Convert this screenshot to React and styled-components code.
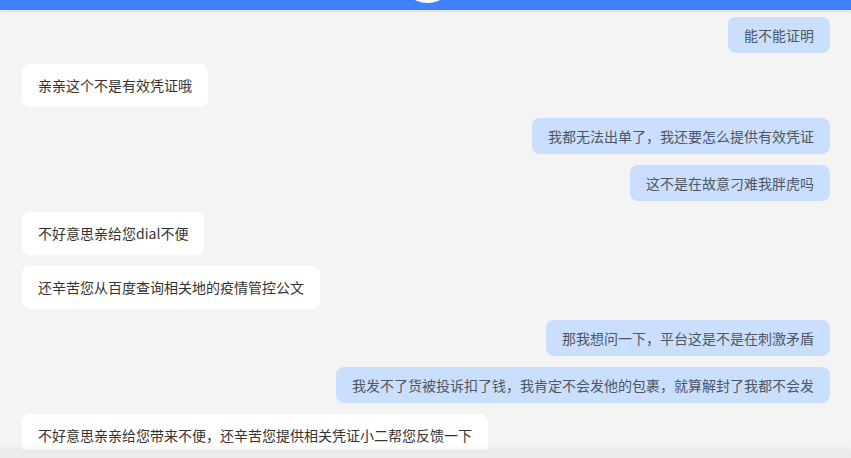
import React from "react";
import styled, { createGlobalStyle } from "styled-components";

const Global = createGlobalStyle`
  html, body { margin: 0; padding: 0; background: #f4f4f4; }
  body { font-family: "Noto Sans CJK SC", "Noto Sans", sans-serif; }
  #root { height: 458px; }
`;

const Page = styled.div`
  height: 458px;
  display: flex;
  flex-direction: column;
  overflow: hidden;
  background: #f4f4f4;
`;

const Header = styled.div`
  position: relative;
  flex: 0 0 10px;
  background: #4080fc;
  box-shadow: 0 1px 4px rgba(0, 0, 0, 0.12);
  z-index: 2;
  overflow: hidden;
`;

const Knob = styled.div`
  position: absolute;
  left: 400px;
  top: -52px;
  width: 55px;
  height: 55px;
  border-radius: 50%;
  background: #ffffff;
`;

const List = styled.div`
  flex: 1;
  overflow: hidden;
  display: flex;
  flex-direction: column;
  gap: 11px;
  padding: 7px 21px 0 22px;
`;

const Row = styled.div`
  display: flex;
  justify-content: ${(p) => (p.$mine ? "flex-end" : "flex-start")};
`;

const Bubble = styled.div`
  box-sizing: border-box;
  font-size: 14px;
  line-height: 20px;
  white-space: nowrap;
  border-radius: 8px;
  padding: ${(p) => (p.$mine ? "8px 16px" : "11px 16px 12px")};
  background: ${(p) => (p.$mine ? "#cadffd" : "#ffffff")};
  color: ${(p) => (p.$mine ? "#4d5666" : "#333333")};
`;

const Footer = styled.div`
  flex: 0 0 8px;
  background: #ececec;
  box-shadow: 0 -2px 4px rgba(0, 0, 0, 0.05);
  z-index: 2;
`;

const messages = [
  { mine: true, text: "能不能证明" },
  { mine: false, text: "亲亲这个不是有效凭证哦" },
  { mine: true, text: "我都无法出单了，我还要怎么提供有效凭证" },
  { mine: true, text: "这不是在故意刁难我胖虎吗" },
  { mine: false, text: "不好意思亲给您dial不便" },
  { mine: false, text: "还辛苦您从百度查询相关地的疫情管控公文" },
  { mine: true, text: "那我想问一下，平台这是不是在刺激矛盾" },
  { mine: true, text: "我发不了货被投诉扣了钱，我肯定不会发他的包裹，就算解封了我都不会发" },
  { mine: false, text: "不好意思亲亲给您带来不便，还辛苦您提供相关凭证小二帮您反馈一下" },
];

export default function App() {
  return (
    <>
      <Global />
      <Page>
        <Header>
          <Knob />
        </Header>
        <List>
          {messages.map((m, i) => (
            <Row key={i} $mine={m.mine}>
              <Bubble $mine={m.mine}>{m.text}</Bubble>
            </Row>
          ))}
        </List>
        <Footer />
      </Page>
    </>
  );
}
